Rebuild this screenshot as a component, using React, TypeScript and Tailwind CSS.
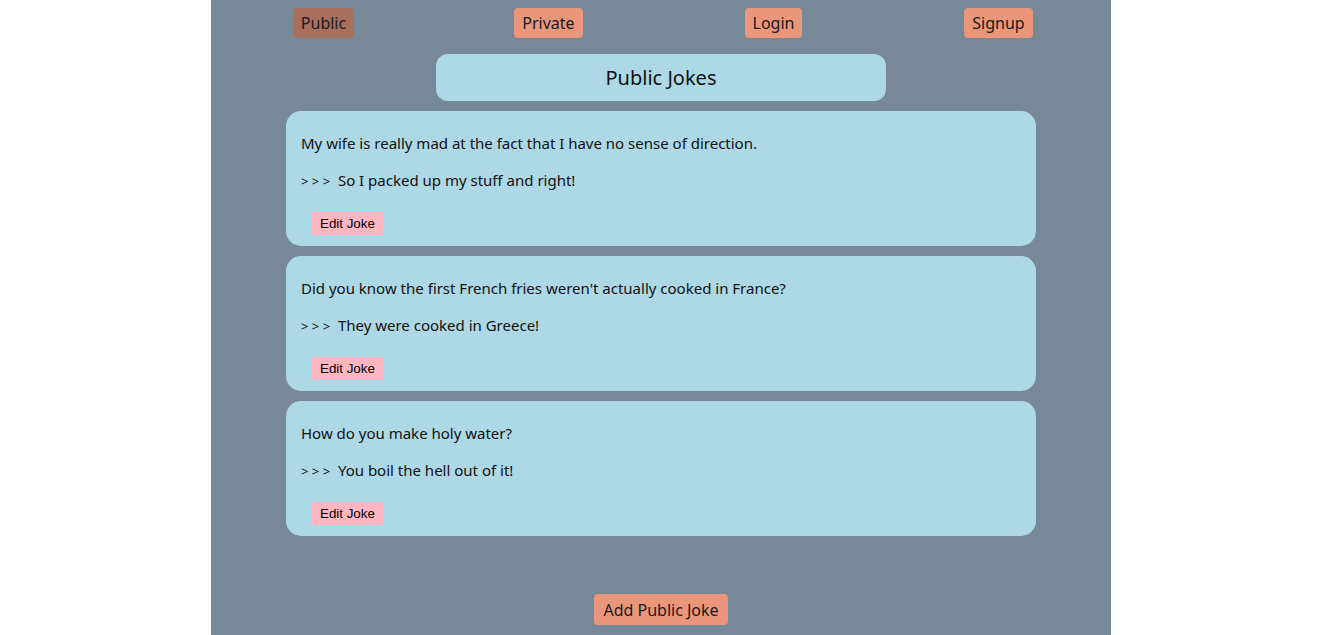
const jokes = [
  {
    setup: "My wife is really mad at the fact that I have no sense of direction.",
    punchline: "So I packed up my stuff and right!",
  },
  {
    setup: "Did you know the first French fries weren't actually cooked in France?",
    punchline: "They were cooked in Greece!",
  },
  {
    setup: "How do you make holy water?",
    punchline: "You boil the hell out of it!",
  },
];

const navItems = ["Public", "Private", "Login", "Signup"];

const NavButton = ({ label, active }: { label: string; active?: boolean }) => (
  <button
    className={
      active
        ? "block h-[30px] px-[8px] rounded-[4px] bg-[#a8705d] text-[16px] text-[#1a1a1a]"
        : "block h-[30px] px-[8px] rounded-[4px] bg-[#e9967a] text-[16px] text-[#1a1a1a]"
    }
  >
    {label}
  </button>
);

const JokeCard = ({ setup, punchline }: { setup: string; punchline: string }) => (
  <div className="w-[750px] rounded-[15px] bg-[#add8e6] px-[15px] pt-[21px] pb-[11px] text-[15px] text-[#111]">
    <p className="h-[22px] leading-[22px]">{setup}</p>
    <p className="mt-[15px] h-[22px] leading-[22px]">
      <span className="text-[13px] leading-none">&gt; &gt; &gt;</span>&nbsp; {punchline}
    </p>
    <button className="block mt-[21px] ml-[10px] h-[23px] px-[9px] rounded-[3px] bg-[#ffb6c1] text-[13.33px] text-black font-['Liberation_Sans',Arial,sans-serif]">
      Edit Joke
    </button>
  </div>
);

export default function App() {
  return (
    <div className="min-h-screen w-full bg-white pr-[2px] font-['Noto_Sans','Open_Sans',sans-serif]">
      <div className="mx-auto w-[900px] min-h-screen bg-[#778899] flex flex-col items-center pt-[8px] pb-[10px]">
        <nav className="w-full grid grid-cols-4">
          {navItems.map((item, i) => (
            <div key={item} className="flex justify-center">
              <NavButton label={item} active={i === 0} />
            </div>
          ))}
        </nav>
        <div className="mt-[16px] w-[450px] h-[47px] rounded-[12px] bg-[#add8e6] flex items-center justify-center text-[20px] text-[#111]">
          Public Jokes
        </div>
        <div className="mt-[10px] flex flex-col gap-[10px]">
          {jokes.map((j) => (
            <JokeCard key={j.setup} setup={j.setup} punchline={j.punchline} />
          ))}
        </div>
        <button className="block mt-[58px] h-[31px] px-[9px] rounded-[4px] bg-[#e9967a] text-[16px] text-[#1a1a1a]">
          Add Public Joke
        </button>
      </div>
    </div>
  );
}
